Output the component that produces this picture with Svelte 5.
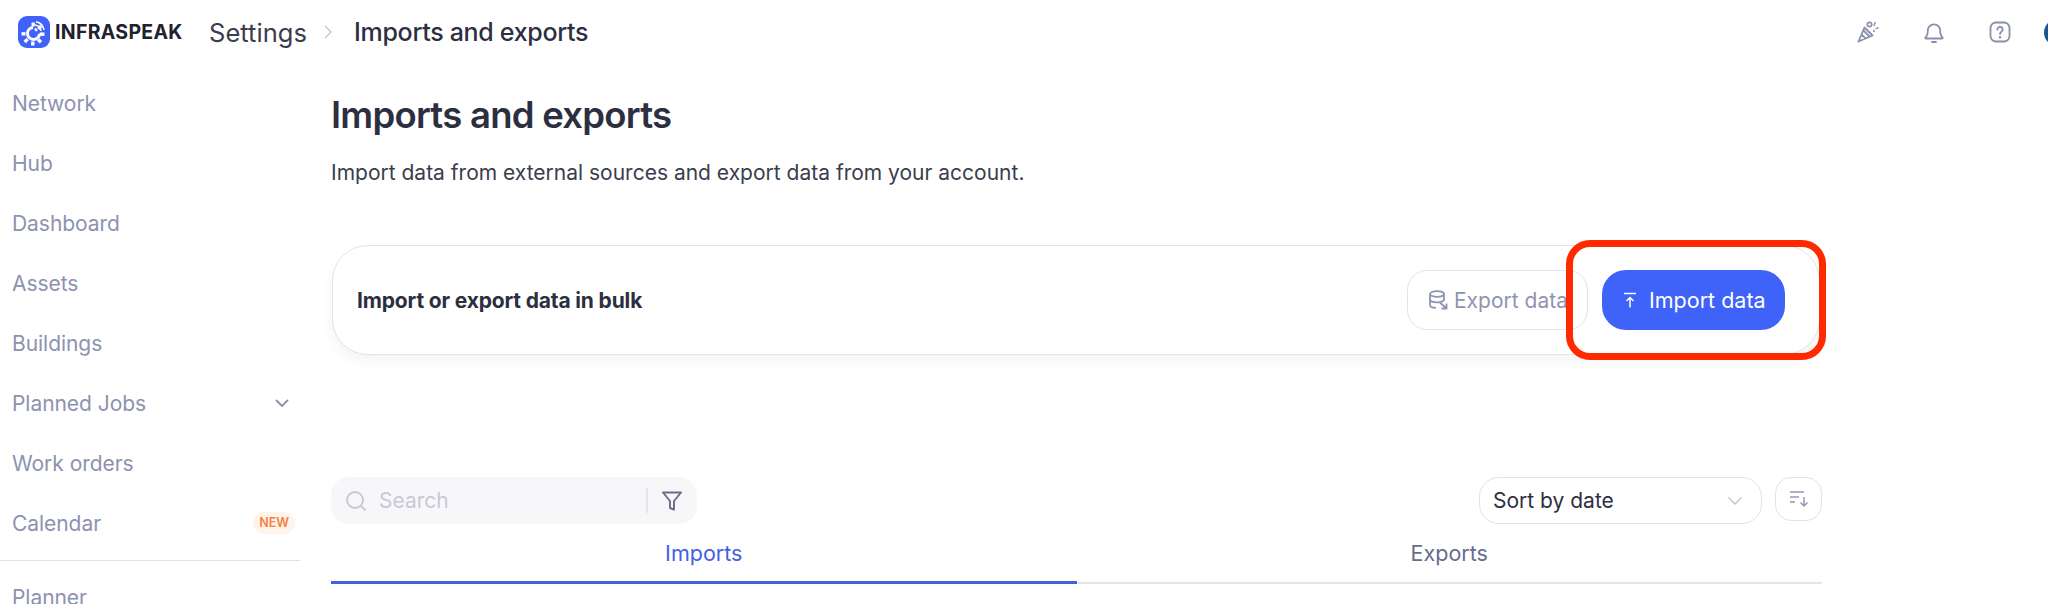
<script lang="ts">
  const navItems = [
    { label: "Network" },
    { label: "Hub" },
    { label: "Dashboard" },
    { label: "Assets" },
    { label: "Buildings" },
    { label: "Planned Jobs", chevron: true },
    { label: "Work orders" },
    { label: "Calendar", badge: "NEW" }
  ];

  // gear teeth of the logo, skipping the upper right where the signal arcs sit
  const gearTeeth = [-90, 0, 45, 90, 135, 180, 225];

  let activeTab = $state("imports");
</script>

<div class="page">
  <header class="topbar">
    <div class="brand">
      <svg class="logo" viewBox="0 0 32 32" width="32" height="32" aria-hidden="true">
        <rect width="32" height="32" rx="9" fill="#3f62f9" />
        <path d="M15 11.500a6 6 0 1 0 6.500 6.500" fill="none" stroke="#fff" stroke-width="3" />
        {#each gearTeeth as deg}
          <rect x="13.500" y="6.500" width="3.400" height="4" fill="#fff" transform="rotate({deg} 15 18)" />
        {/each}
        <path d="M21.500 18h3M17 12.500l2 2.500" fill="none" stroke="#fff" stroke-width="2.400" />
        <path d="M17 9a6.500 6.500 0 0 1 6 6M18 5.800a10 10 0 0 1 8 8" fill="none" stroke="#fff" stroke-width="1.600" />
      </svg>
      <span class="brand-name">INFRASPEAK</span>
    </div>
    <span class="crumb">Settings</span>
    <svg class="crumb-sep" viewBox="0 0 10 16" width="10" height="16" aria-hidden="true">
      <path d="M2 2l6 6-6 6" fill="none" stroke="#c4c5cc" stroke-width="1.400" />
    </svg>
    <span class="crumb current">Imports and exports</span>

    <div class="top-actions">
      <svg viewBox="0 0 24 24" width="24" height="24" aria-hidden="true">
        <path d="M8.500 7.500L2.500 21.500l14-6zM5.500 14.500l4 4M7.500 10.500l6 6" fill="none" stroke="#8a8fac" stroke-width="1.800" stroke-linejoin="round" />
        <circle cx="13.500" cy="4.500" r="2.200" fill="none" stroke="#8a8fac" stroke-width="1.700" />
        <circle cx="18" cy="11" r="1.100" fill="#8a8fac" />
        <path d="M19 2c.8 1.500-1.500 2.300-.8 4M22.500 7.500c-1 1.200-2.200.6-3 1.200" fill="none" stroke="#8a8fac" stroke-width="1.400" />
      </svg>
      <svg viewBox="0 0 24 24" width="24" height="24" aria-hidden="true">
        <path d="M3.500 17.500c1.800-1.600 2.300-3.400 2.300-7a6.200 6.200 0 0 1 12.400 0c0 3.600.5 5.400 2.300 7 .5.500.1 1-.5 1h-16c-.6 0-1-.5-.5-1zM10 22h4" fill="none" stroke="#8a8fac" stroke-width="1.800" stroke-linejoin="round" stroke-linecap="round" />
      </svg>
      <svg viewBox="0 0 24 24" width="24" height="24" aria-hidden="true">
        <rect x="2.500" y="2.500" width="19" height="19" rx="5.500" fill="none" stroke="#8a8fac" stroke-width="1.800" />
        <path d="M9.300 9.500a2.700 2.700 0 1 1 4.100 2.300c-1 .6-1.400 1.100-1.400 2.200" fill="none" stroke="#8a8fac" stroke-width="1.800" stroke-linecap="round" />
        <circle cx="12" cy="17.200" r="1.200" fill="#8a8fac" />
      </svg>
      <div class="avatar"></div>
    </div>
  </header>

  <div class="body">
    <nav class="sidebar">
      {#each navItems as item}
        <div class="nav-item">
          <span>{item.label}</span>
          {#if item.chevron}
            <svg class="nav-chevron" viewBox="0 0 16 10" width="16" height="10" aria-hidden="true">
              <path d="M2 2l6 6 6-6" fill="none" stroke="#8a8fac" stroke-width="1.800" />
            </svg>
          {/if}
          {#if item.badge}
            <span class="badge">{item.badge}</span>
          {/if}
        </div>
      {/each}
      <hr class="nav-divider" />
      <div class="nav-item">Planner</div>
    </nav>

    <main class="content">
      <h1>Imports and exports</h1>
      <p class="subtitle">Import data from external sources and export data from your account.</p>

      <section class="bulk-card">
        <h2>Import or export data in bulk</h2>
        <div class="bulk-actions">
          <button class="btn-outline">
            <svg viewBox="0 0 20 20" width="20" height="20" aria-hidden="true">
              <ellipse cx="9" cy="4" rx="7" ry="2.800" fill="none" stroke="#8f94b0" stroke-width="1.800" />
              <path d="M2 4v11c0 1.500 2.500 2.800 6 2.800M16 4v6M2 9.500c0 1.500 3 2.800 7 2.800s7-1.300 7-2.800M12 12.500l6 5.500M18.500 13.500v5h-5" fill="none" stroke="#8f94b0" stroke-width="1.800" />
            </svg>
            Export data
          </button>
          <button class="btn-primary">
            <svg viewBox="0 0 16 18" width="16" height="18" aria-hidden="true">
              <path d="M2 2.500h12M8 16.500V6.500M4.500 10L8 6.500l3.500 3.500" fill="none" stroke="#fff" stroke-width="1.500" />
            </svg>
            Import data
          </button>
        </div>
        <div class="highlight"></div>
      </section>

      <div class="toolbar">
        <div class="search">
          <svg viewBox="0 0 22 22" width="22" height="22" aria-hidden="true">
            <circle cx="10" cy="10" r="8" fill="none" stroke="#c6c7d3" stroke-width="1.800" />
            <path d="M16 16l4.500 4.500" stroke="#c6c7d3" stroke-width="1.800" />
          </svg>
          <span class="placeholder">Search</span>
          <span class="search-sep"></span>
          <svg viewBox="0 0 22 22" width="22" height="22" aria-hidden="true">
            <path d="M2 2.500h18l-7 8.500v8.500l-4-1.500v-7z" fill="none" stroke="#686c8c" stroke-width="1.900" stroke-linejoin="round" />
          </svg>
        </div>

        <div class="sort">
          <div class="sort-select">
            <span>Sort by date</span>
            <svg viewBox="0 0 16 10" width="16" height="10" aria-hidden="true">
              <path d="M1.500 1.500L8 8l6.500-6.500" fill="none" stroke="#c4c6d2" stroke-width="1.500" />
            </svg>
          </div>
          <button class="sort-dir" aria-label="Sort direction">
            <svg viewBox="0 0 20 18" width="20" height="18" aria-hidden="true">
              <path d="M1 2h14M1 7h9M1 12h5" fill="none" stroke="#9599b5" stroke-width="1.500" />
              <path d="M15 7v9M11.500 12.500L15 16l3.500-3.500" fill="none" stroke="#9599b5" stroke-width="1.500" />
            </svg>
          </button>
        </div>
      </div>

      <div class="tabs">
        <button class="tab" class:active={activeTab === "imports"} onclick={() => (activeTab = "imports")}>Imports</button>
        <button class="tab" class:active={activeTab === "exports"} onclick={() => (activeTab = "exports")}>Exports</button>
      </div>
    </main>
  </div>
</div>

<style>
  :global(body) {
    margin: 0;
    background: #fff;
    overflow: hidden;
  }

  .page {
    width: 2048px;
    height: 604px;
    overflow: hidden;
    font-family: Inter, "Noto Sans", sans-serif;
    color: #2c2f3f;
  }

  .topbar {
    height: 64px;
    display: flex;
    align-items: center;
    padding-left: 18px;
  }

  .brand {
    display: flex;
    align-items: center;
    gap: 5px;
    width: 191px;
    flex-shrink: 0;
  }

  .brand-name {
    font-size: 19.500px;
    font-weight: 700;
    letter-spacing: 0.3px;
    color: #20222e;
  }

  .crumb {
    font-size: 25.500px;
    color: #3a3d4d;
    letter-spacing: 0.05px;
  }

  .crumb.current {
    font-size: 25px;
    font-weight: 500;
    color: #2c2f3f;
    letter-spacing: -0.3px;
  }

  .crumb-sep {
    margin: 0 21px 0 16px;
  }

  .top-actions {
    margin-left: auto;
    width: 192px;
    display: flex;
    align-items: center;
    gap: 42px;
    overflow: hidden;
    flex-shrink: 0;
  }

  .top-actions svg {
    flex-shrink: 0;
  }

  .avatar {
    width: 27px;
    height: 27px;
    margin-left: -10px;
    border-radius: 50%;
    background: #1a5690;
    flex-shrink: 0;
  }

  .body {
    display: flex;
  }

  .sidebar {
    width: 300px;
    padding-top: 9px;
    flex-shrink: 0;
  }

  .nav-item {
    height: 60px;
    padding: 0 5px 0 12px;
    display: flex;
    align-items: center;
    justify-content: space-between;
    font-size: 21px;
    color: #8c92b0;
    letter-spacing: -0.05px;
  }

  .nav-chevron {
    margin-right: 5px;
  }

  .badge {
    padding: 4px 6px;
    border-radius: 11px;
    background: #fff3ea;
    color: #f58143;
    font-size: 12.500px;
    font-weight: 600;
    line-height: 14px;
    letter-spacing: 0;
  }

  .nav-divider {
    margin: 7px 0 6px;
    border: 0;
    border-top: 1px solid #dfe0e6;
  }

  .content {
    width: 1491px;
    margin-left: 31px;
    padding-top: 29px;
  }

  h1 {
    margin: 0;
    font-size: 36.500px;
    line-height: 44px;
    font-weight: 600;
    letter-spacing: -0.75px;
    color: #2c2f3f;
  }

  .subtitle {
    margin: 22px 0 0;
    font-size: 21px;
    line-height: 28px;
    color: #3a3d4d;
  }

  .bulk-card {
    position: relative;
    margin-top: 58px;
    width: 1488px;
    height: 110px;
    box-sizing: border-box;
    margin-left: 1px;
    padding: 0 34px 0 24px;
    display: flex;
    align-items: center;
    justify-content: space-between;
    border: 1px solid #e2e3ea;
    border-radius: 36px;
    background: #fff;
    box-shadow: 0 6px 12px rgba(40, 44, 70, 0.06);
  }

  h2 {
    margin: 0;
    font-size: 21px;
    font-weight: 700;
    letter-spacing: -0.15px;
    color: #2c2f3f;
  }

  .bulk-actions {
    display: flex;
    gap: 14px;
  }

  button {
    font-family: inherit;
  }

  .btn-outline,
  .btn-primary {
    height: 60px;
    display: flex;
    align-items: center;
    font-size: 21px;
  }

  .btn-outline {
    width: 181px;
    padding: 0 0 0 20px;
    gap: 6px;
    border: 1px solid #e2e3ea;
    border-radius: 20px;
    background: #fff;
    color: #8f94b0;
    white-space: nowrap;
  }

  .btn-primary {
    width: 183px;
    padding: 0 0 0 20px;
    gap: 11px;
    border: 0;
    border-radius: 24px;
    background: #3f62f9;
    color: #fff;
    white-space: nowrap;
    font-size: 21.500px;
  }

  /* red annotation drawn over the screenshot */
  .highlight {
    position: absolute;
    left: 1233px;
    top: -6px;
    width: 260px;
    height: 120px;
    box-sizing: border-box;
    border: 7px solid #ff2a00;
    border-radius: 24px;
    pointer-events: none;
  }

  .toolbar {
    margin-top: 122px;
    display: flex;
    justify-content: space-between;
    align-items: flex-start;
  }

  .search {
    width: 366px;
    height: 47px;
    box-sizing: border-box;
    padding: 0 14px;
    display: flex;
    align-items: center;
    background: #f7f7fa;
    border-radius: 18px;
  }

  .placeholder {
    margin-left: 12px;
    flex: 1;
    font-size: 21px;
    color: #c8c9d6;
  }

  .search-sep {
    width: 2px;
    height: 25px;
    margin-right: 13px;
    background: #e4e5ec;
  }

  .sort {
    display: flex;
    gap: 13px;
  }

  .sort-select {
    width: 283px;
    height: 47px;
    box-sizing: border-box;
    padding: 0 18px 0 13px;
    display: flex;
    align-items: center;
    justify-content: space-between;
    border: 1px solid #e2e3ea;
    border-radius: 20px;
    font-size: 21px;
    color: #2c2f3f;
  }

  .sort-dir {
    width: 47px;
    height: 44px;
    padding: 0;
    display: flex;
    align-items: center;
    justify-content: center;
    border: 1px solid #e2e3ea;
    border-radius: 16px;
    background: #fff;
  }

  .tabs {
    display: flex;
    border-bottom: 2px solid #e4e5ea;
  }

  .tab {
    flex: 1;
    height: 60px;
    padding: 0;
    border: 0;
    margin-bottom: -2px;
    border-bottom: 3px solid transparent;
    background: none;
    font-size: 21.500px;
    color: #686c8c;
  }

  .tab.active {
    color: #3f62e0;
    border-bottom-color: #3f62e0;
  }
</style>
